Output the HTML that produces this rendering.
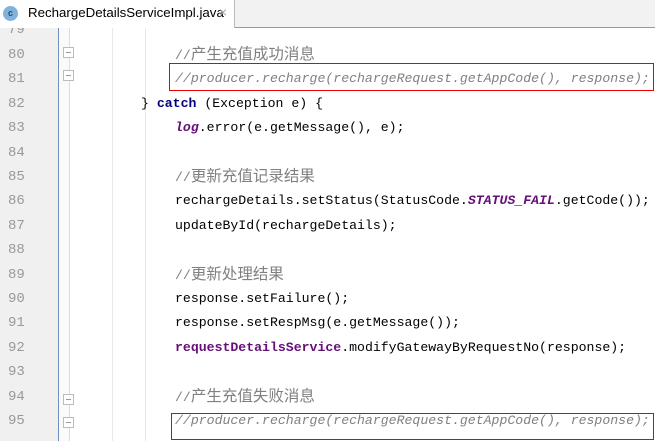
<!DOCTYPE html>
<html><head><meta charset="utf-8"><style>
body{margin:0;width:655px;height:441px;overflow:hidden;background:#fff;position:relative;font-family:"Liberation Mono","Noto Sans CJK SC",monospace;}
.hdr{position:absolute;left:0;top:0;width:655px;height:27px;background:#f2f2f2;border-bottom:1px solid #999;}
.tab{position:absolute;left:0;top:0;width:234px;height:28px;background:#fff;border-right:1px solid #bbb;}
.tab .ic{position:absolute;left:3px;top:6px;width:15px;height:15px;border-radius:50%;background:#7fb3de;font:bold 9px "Liberation Sans";text-align:center;line-height:15px;color:#2a4a66}
.tab .t{position:absolute;left:28px;top:5px;font:13.3px "Liberation Sans",sans-serif;color:#000}
.tab .x{position:absolute;left:219px;top:4px;font:14px "Liberation Sans";color:#aaa}
.gut{position:absolute;left:0;top:28px;width:58px;height:413px;background:#f0f0f0;}
.bl{position:absolute;left:58px;top:28px;width:1px;height:413px;background:#6f8fbf}
.g2{position:absolute;left:59px;top:28px;width:11px;height:413px;background:#fafafa}
.fl{position:absolute;left:69px;top:28px;width:1px;height:413px;background:#ddd}
.ig{position:absolute;top:28px;width:1px;height:413px;background:#e8e8e8}
.ln{position:absolute;left:8px;font-size:14px;color:#999;line-height:24px}
.c{position:absolute;font-size:13.2px;line-height:24px;white-space:pre;color:#000}
.cm{color:#808080}.it{font-style:italic}
.zh{font-size:15.5px}
.kw{color:#000080;font-weight:bold}
.pu{color:#660e7a;font-weight:bold;font-style:italic}
.fd{color:#660e7a;font-weight:bold}
.box{position:absolute;border:1px solid #e00;}
.fold{position:absolute;left:63px;width:11px;height:11px;border:1px solid #bbb;background:#fff;box-sizing:border-box}
.fold:after{content:"";position:absolute;left:2px;top:4px;width:5px;height:1px;background:#999}
.w{position:absolute;left:0;top:3px;width:655px;height:441px}
</style></head><body>
<div class="gut"></div><div class="bl"></div><div class="g2"></div><div class="fl"></div>
<div class="ig" style="left:112px"></div><div class="ig" style="left:145px"></div>
<div class="w">
<div class="ln" style="top:15px">79</div>
<div class="ln" style="top:40px">80</div><div class="ln" style="top:64px">81</div><div class="ln" style="top:89px">82</div><div class="ln" style="top:113px">83</div><div class="ln" style="top:138px">84</div><div class="ln" style="top:162px">85</div><div class="ln" style="top:186px">86</div><div class="ln" style="top:211px">87</div><div class="ln" style="top:235px">88</div><div class="ln" style="top:260px">89</div><div class="ln" style="top:284px">90</div><div class="ln" style="top:308px">91</div><div class="ln" style="top:333px">92</div><div class="ln" style="top:357px">93</div><div class="ln" style="top:382px">94</div><div class="ln" style="top:406px">95</div>
<div class="c cm" style="left:175px;top:40px">//<span class="zh">产生充值成功消息</span></div>
<div class="c cm it" style="left:175px;top:64px">//producer.recharge(rechargeRequest.getAppCode(), response);</div>
<div class="c" style="left:141px;top:89px">} <span class="kw">catch</span> (Exception e) {</div>
<div class="c" style="left:175px;top:113px"><span class="pu">log</span>.error(e.getMessage(), e);</div>
<div class="c cm" style="left:175px;top:162px">//<span class="zh">更新充值记录结果</span></div>
<div class="c" style="left:175px;top:186px">rechargeDetails.setStatus(StatusCode.<span class="pu">STATUS_FAIL</span>.getCode());</div>
<div class="c" style="left:175px;top:211px">updateById(rechargeDetails);</div>
<div class="c cm" style="left:175px;top:260px">//<span class="zh">更新处理结果</span></div>
<div class="c" style="left:175px;top:284px">response.setFailure();</div>
<div class="c" style="left:175px;top:308px">response.setRespMsg(e.getMessage());</div>
<div class="c" style="left:175px;top:333px"><span class="fd">requestDetailsService</span>.modifyGatewayByRequestNo(response);</div>
<div class="c cm" style="left:175px;top:382px">//<span class="zh">产生充值失败消息</span></div>
<div class="c cm it" style="left:175px;top:406px">//producer.recharge(rechargeRequest.getAppCode(), response);</div>
</div>
<div class="fold" style="top:47px"></div><div class="fold" style="top:70px"></div>
<div class="fold" style="top:394px"></div><div class="fold" style="top:417px"></div>
<div class="box" style="left:169px;top:63px;width:483px;height:26px"></div>
<div class="box" style="left:171px;top:413px;width:481px;height:25px"></div>
<div class="hdr"></div>
<div class="tab"><div class="ic">c</div><div class="t">RechargeDetailsServiceImpl.java</div><div class="x">×</div></div>
</body></html>
